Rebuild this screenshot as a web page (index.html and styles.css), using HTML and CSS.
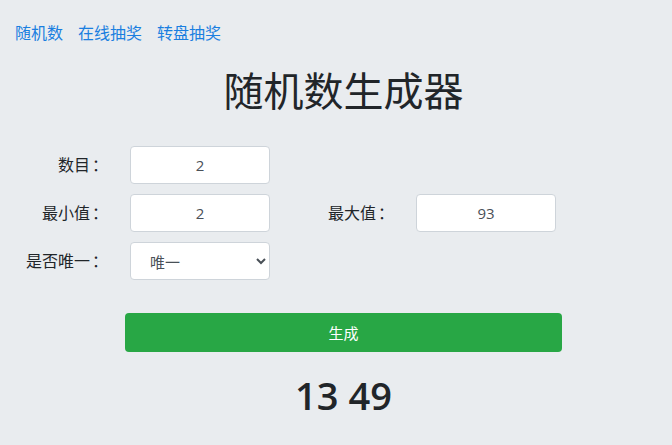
FILE: index.html
```html
<!DOCTYPE html>
<html lang="zh-CN">
<head>
<meta charset="utf-8">
<title>随机数生成器</title>
<link rel="stylesheet" href="styles.css">
</head>
<body>
<nav class="nav">
  <a href="#" class="nav-link">随机数</a>
  <a href="#" class="nav-link">在线抽奖</a>
  <a href="#" class="nav-link">转盘抽奖</a>
</nav>
<h1 class="title">随机数生成器</h1>
<form class="form">
  <label class="label">数目<span class="colon">：</span></label>
  <input class="field" type="text" value="2">
  <span class="empty"></span>
  <span class="empty"></span>

  <label class="label">最小值<span class="colon">：</span></label>
  <input class="field" type="text" value="2">
  <label class="label">最大值<span class="colon">：</span></label>
  <input class="field" type="text" value="93">

  <label class="label">是否唯一<span class="colon">：</span></label>
  <select class="field select">
    <option>唯一</option>
    <option>不唯一</option>
  </select>
  <span class="empty"></span>
  <span class="empty"></span>
</form>
<div class="actions">
  <button class="btn" type="button">生成</button>
</div>
<div class="result">13 49</div>
</body>
</html>
```

FILE: styles.css
```css
html, body {
  margin: 0;
  padding: 0;
  background: #e9ecef;
  color: #212529;
  font-family: "Noto Sans", "Noto Sans CJK SC", sans-serif;
}

.nav {
  display: flex;
  gap: 15px;
  padding: 21px 15px 0;
}

.nav-link {
  font-size: 16px;
  line-height: 24px;
  color: #1a7fe0;
  text-decoration: none;
}

.title {
  margin: 22px 0 31px;
  padding-left: 15px;
  text-align: center;
  font-size: 40px;
  line-height: 48px;
  font-weight: 400;
}

.form {
  display: grid;
  grid-template-columns: 115px 140px 116px 140px;
  grid-auto-rows: 38px;
  column-gap: 15px;
  row-gap: 10px;
}

.label {
  font-size: 16px;
  text-align: right;
  padding-right: 7px;
  line-height: 38px;
  height: 38px;
  overflow: hidden;
}

.colon {
  padding-left: 2px;
}

.field {
  box-sizing: border-box;
  width: 140px;
  height: 38px;
  border: 1px solid #ced4da;
  border-radius: 4px;
  background: #fff;
  color: #495057;
  font-family: "Open Sans", "Noto Sans CJK SC", sans-serif;
  font-size: 15px;
  text-align: center;
  padding: 0 12px;
  outline: none;
}

.select {
  text-align: left;
  padding-left: 15px;
  font-family: "Noto Sans CJK SC", sans-serif;
}

.actions {
  display: flex;
  justify-content: center;
  margin-top: 33px;
  padding-left: 15px;
}

.btn {
  width: 437px;
  height: 39px;
  border: none;
  border-radius: 4px;
  background: #28a745;
  color: #fff;
  font-family: "Noto Sans CJK SC", sans-serif;
  font-size: 15px;
}

.result {
  text-align: center;
  padding-left: 15px;
  font-size: 38px;
  font-weight: 600;
  line-height: 48px;
  margin-top: 19px;
  font-family: "Open Sans", sans-serif;
}
```
